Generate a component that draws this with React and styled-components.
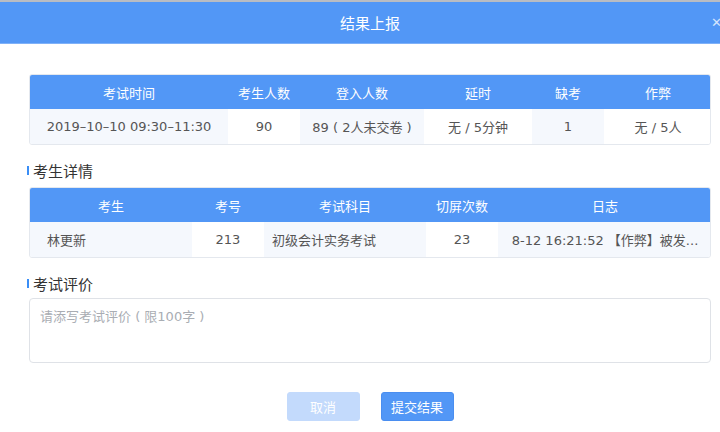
import React from "react";
import styled, { createGlobalStyle } from "styled-components";

const GlobalStyle = createGlobalStyle`
  html, body {
    margin: 0;
    padding: 0;
    background: #ffffff;
    overflow: hidden;
  }
  body {
    font-family: "DejaVu Sans", "Noto Sans CJK SC", sans-serif;
    border-top: 2px solid #b9bcc2;
  }
`;

const Dialog = styled.div`
  width: 740px;
  background: #fff;
`;

const Header = styled.div`
  position: relative;
  height: 41px;
  background: #5297f6;
  border-bottom: 1px solid #7fb1f8;
  display: flex;
  align-items: center;
  justify-content: center;
  color: #fff;
  font-family: "Noto Sans CJK SC", sans-serif;
  font-size: 15px;
`;

const Close = styled.span`
  position: absolute;
  right: 18px;
  top: 14px;
  color: rgba(255, 255, 255, 0.75);
  font-family: "DejaVu Sans", sans-serif;
  font-size: 13px;
  line-height: 1;
`;

const Body = styled.div`
  padding: 30px 29px 0;
  display: flex;
  flex-direction: column;
`;

const Table = styled.div`
  display: grid;
  grid-template-columns: ${(p) => p.cols};
  border: 1px solid #e4e8ee;
  border-radius: 3px;
  overflow: hidden;
`;

const Th = styled.div`
  height: 34px;
  background: #5297f6;
  color: #fff;
  font-family: "Noto Sans CJK SC", sans-serif;
  font-size: 13px;
  display: flex;
  align-items: center;
  justify-content: center;
`;

const Td = styled.div`
  height: 35px;
  background: ${(p) => (p.shade ? "#f5f8fd" : "#ffffff")};
  color: #555;
  font-family: "DejaVu Sans", "Noto Sans CJK SC", sans-serif;
  font-size: 13px;
  display: flex;
  align-items: center;
  justify-content: ${(p) => (p.left ? "flex-start" : "center")};
  padding-left: ${(p) => (p.left ? p.left : 0)}px;
  white-space: pre;
  overflow: hidden;
`;

const SectionTitle = styled.div`
  display: flex;
  align-items: center;
  margin: 15px 0 7px -2px;
  height: 20px;
  color: #333;
  font-family: "Noto Sans CJK SC", sans-serif;
  font-size: 15px;
  &::before {
    content: "";
    width: 2px;
    height: 9px;
    background: #3a8ef6;
    margin-right: 4px;
  }
`;

const TextArea = styled.textarea`
  box-sizing: border-box;
  height: 65px;
  margin-top: -2px;
  border: 1px solid #dfe2e7;
  border-radius: 4px;
  padding: 7px 10px;
  font-family: "DejaVu Sans", "Noto Sans CJK SC", sans-serif;
  font-size: 13px;
  color: #555;
  resize: none;
  outline: none;
  &::placeholder {
    color: #a9adb3;
  }
`;

const Footer = styled.div`
  display: flex;
  justify-content: center;
  gap: 21px;
  margin-top: 29px;
`;

const Button = styled.button`
  width: 73px;
  height: 29px;
  border-radius: 3px;
  border: 1px solid ${(p) => (p.primary ? "#4a8ef0" : "#c3dafc")};
  background: ${(p) => (p.primary ? "#5297f6" : "#c3dafc")};
  color: #fff;
  font-family: "Noto Sans CJK SC", sans-serif;
  font-size: 13px;
  padding: 0;
`;

const summaryCols = "198px 72px 124px 108px 72px 108px";
const detailCols = "162px 72px 162px 72px 214px";

const summaryHead = ["考试时间", "考生人数", "登入人数", "延时", "缺考", "作弊"];
const summaryRow = ["2019–10–10 09:30–11:30", "90", "89 ( 2人未交卷 )", "无 / 5分钟", "1", "无 / 5人"];

const detailHead = ["考生", "考号", "考试科目", "切屏次数", "日志"];
const detailRow = [
  { text: "林更新", left: 17 },
  { text: "213" },
  { text: "初级会计实务考试", left: 8 },
  { text: "23" },
  { text: "8-12 16:21:52 【作弊】被发..." },
];

export default function App() {
  return (
    <>
      <GlobalStyle />
      <Dialog>
        <Header>
          结果上报
          <Close>✕</Close>
        </Header>
        <Body>
          <Table cols={summaryCols}>
            {summaryHead.map((h) => (
              <Th key={h}>{h}</Th>
            ))}
            {summaryRow.map((v, i) => (
              <Td key={i} shade={i % 2 === 0}>
                {v}
              </Td>
            ))}
          </Table>

          <SectionTitle>考生详情</SectionTitle>
          <Table cols={detailCols}>
            {detailHead.map((h) => (
              <Th key={h}>{h}</Th>
            ))}
            {detailRow.map((c, i) => (
              <Td key={i} shade={i % 2 === 0} left={c.left}>
                {c.text}
              </Td>
            ))}
          </Table>

          <SectionTitle>考试评价</SectionTitle>
          <TextArea placeholder="请添写考试评价 ( 限100字 )" />

          <Footer>
            <Button>取消</Button>
            <Button primary>提交结果</Button>
          </Footer>
        </Body>
      </Dialog>
    </>
  );
}
